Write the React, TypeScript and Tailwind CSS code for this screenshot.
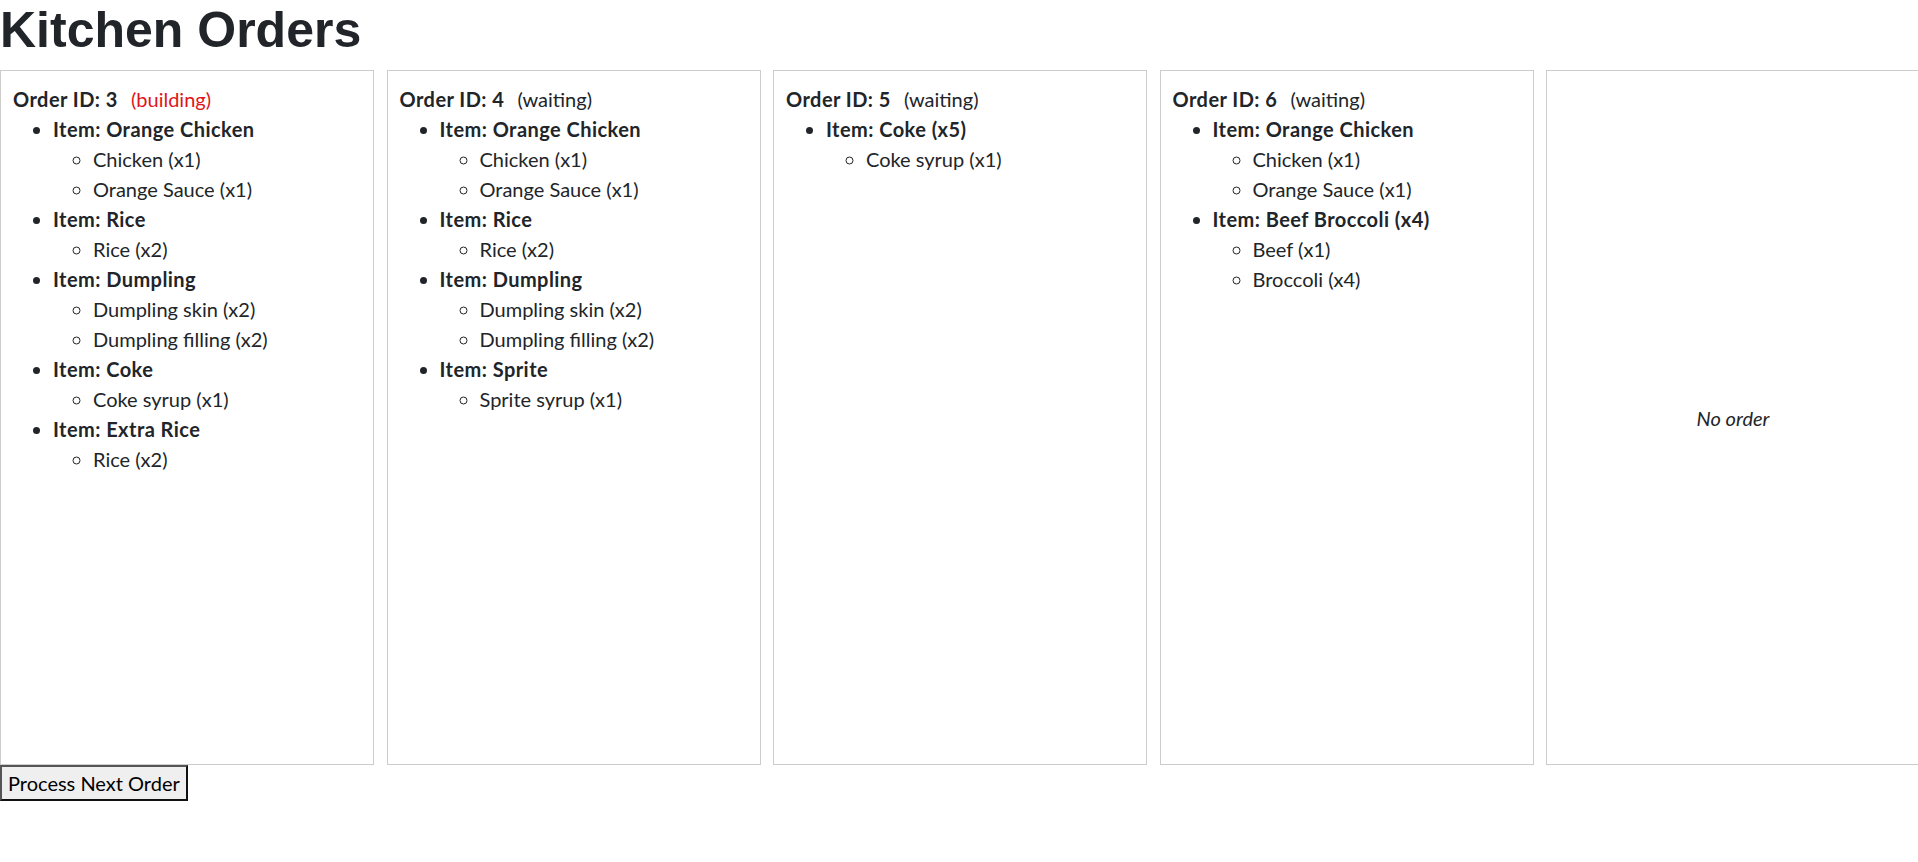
import React from "react";

type Part = { name: string; qty: number };
type Item = { label: string; parts: Part[] };
type Order = { id: number; status: "building" | "waiting"; items: Item[] };

const ORDERS: Order[] = [
  {
    id: 3,
    status: "building",
    items: [
      { label: "Orange Chicken", parts: [{ name: "Chicken", qty: 1 }, { name: "Orange Sauce", qty: 1 }] },
      { label: "Rice", parts: [{ name: "Rice", qty: 2 }] },
      { label: "Dumpling", parts: [{ name: "Dumpling skin", qty: 2 }, { name: "Dumpling filling", qty: 2 }] },
      { label: "Coke", parts: [{ name: "Coke syrup", qty: 1 }] },
      { label: "Extra Rice", parts: [{ name: "Rice", qty: 2 }] },
    ],
  },
  {
    id: 4,
    status: "waiting",
    items: [
      { label: "Orange Chicken", parts: [{ name: "Chicken", qty: 1 }, { name: "Orange Sauce", qty: 1 }] },
      { label: "Rice", parts: [{ name: "Rice", qty: 2 }] },
      { label: "Dumpling", parts: [{ name: "Dumpling skin", qty: 2 }, { name: "Dumpling filling", qty: 2 }] },
      { label: "Sprite", parts: [{ name: "Sprite syrup", qty: 1 }] },
    ],
  },
  {
    id: 5,
    status: "waiting",
    items: [{ label: "Coke (x5)", parts: [{ name: "Coke syrup", qty: 1 }] }],
  },
  {
    id: 6,
    status: "waiting",
    items: [
      { label: "Orange Chicken", parts: [{ name: "Chicken", qty: 1 }, { name: "Orange Sauce", qty: 1 }] },
      { label: "Beef Broccoli (x4)", parts: [{ name: "Beef", qty: 1 }, { name: "Broccoli", qty: 4 }] },
    ],
  },
];

function OrderCard({ order }: { order: Order }) {
  return (
    <div className="h-[695px] w-[374px] shrink-0 border border-[#ccc] px-3 pt-[13px]">
      <div>
        <strong className="tracking-[0.45px]">Order ID: {order.id}</strong>{" "}
        <span className={order.status === "building" ? "ml-2 text-[#e0141c]" : "ml-2"}>
          ({order.status})
        </span>
      </div>
      <ul className="list-disc pl-10">
        {order.items.map((item, i) => (
          <li key={i}>
            <strong className="tracking-[0.45px]">Item: {item.label}</strong>
            <ul className="list-[circle] pl-10">
              {item.parts.map((p, j) => (
                <li key={j}>
                  {p.name} (x{p.qty})
                </li>
              ))}
            </ul>
          </li>
        ))}
      </ul>
    </div>
  );
}

export default function App() {
  return (
    <div className="min-h-screen w-full overflow-hidden bg-white font-['Lato',sans-serif] text-[20px] leading-[30px] text-[#212529]">
      <h1 className="mb-[10px] font-['Liberation_Sans',Arial,sans-serif] text-[50px] leading-[60px] font-bold">
        Kitchen Orders
      </h1>

      <div className="flex gap-[12.5px]">
        {ORDERS.map((o) => (
          <OrderCard key={o.id} order={o} />
        ))}
        <div className="flex h-[695px] w-[374px] shrink-0 items-center justify-center border border-[#ccc] p-3 italic">
          No order
        </div>
      </div>

      <button
        type="button"
        className="h-[36px] border-2 border-[#111] border-t-[#555] border-l-[#555] bg-[#efefef] px-[6px] text-[20px] leading-[30px] text-black"
      >
        Process Next Order
      </button>
    </div>
  );
}
